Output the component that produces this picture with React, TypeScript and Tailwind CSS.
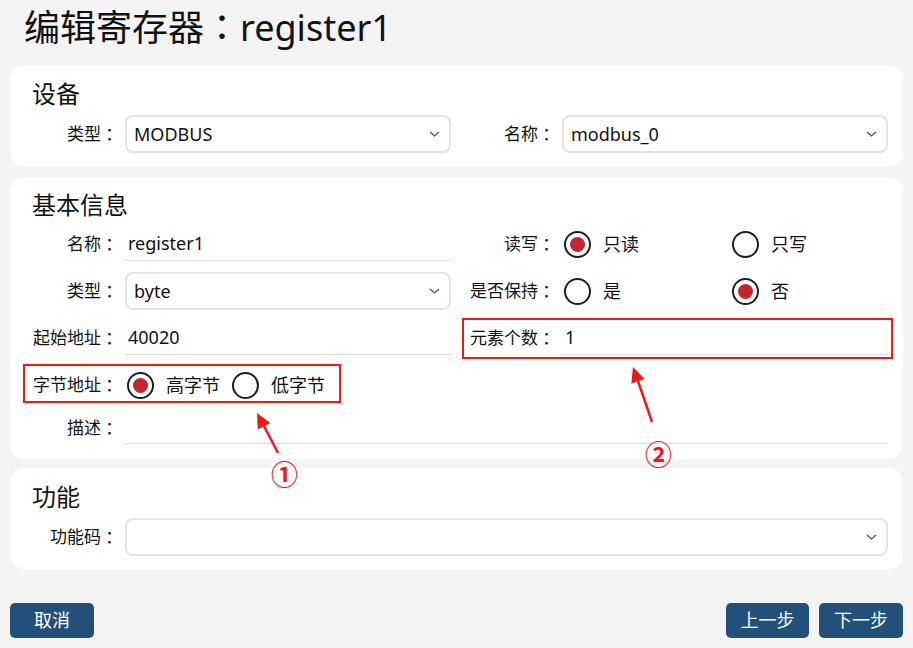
import React from "react";

function Chevron() {
  return (
    <svg width="11" height="6" viewBox="0 0 11 6" className="shrink-0">
      <path d="M1 1l4.5 4L10 1" fill="none" stroke="#555" strokeWidth="1.3" />
    </svg>
  );
}

function Select({ value = "" }: { value?: string }) {
  return (
    <div className="flex h-[38px] items-center justify-between rounded-[8px] border-2 border-[#e3e3e3] bg-white pl-[7px] pr-[9px] text-[18px] text-[#111]">
      <span>{value}</span>
      <Chevron />
    </div>
  );
}

function TextInput({ value = "", className = "h-[34px]" }: { value?: string; className?: string }) {
  return (
    <div className={`flex items-center border-b border-[#dcdcdc] pl-[3px] text-[18px] text-[#111] ${className}`}>
      {value}
    </div>
  );
}

function Radio({ checked = false, label }: { checked?: boolean; label: string }) {
  return (
    <div className="flex items-center gap-[12px]">
      <span className="flex h-[27px] w-[27px] items-center justify-center rounded-full border-2 border-[#1e1e1e]">
        {checked && <span className="h-[15px] w-[15px] rounded-full bg-[#c3262e]" />}
      </span>
      <span className="text-[18px] text-[#111]">{label}</span>
    </div>
  );
}

function Field({ label, children, className = "" }: { label: string; children: React.ReactNode; className?: string }) {
  return (
    <div className={`flex h-[38px] items-center ${className}`}>
      <div className="flex w-[86px] shrink-0 justify-end whitespace-nowrap text-[17px] text-[#111]">
        {label}
        <span className="font-['Noto_Sans_CJK_TC',sans-serif]">：</span>
      </div>
      <div className="ml-[7px] min-w-0 flex-1">{children}</div>
    </div>
  );
}

function Card({ title, children, className = "" }: { title: string; children: React.ReactNode; className?: string }) {
  return (
    <section className={`rounded-[14px] bg-white pl-[22px] pr-[15px] ${className}`}>
      <h2 className="h-[32px] text-[24px] leading-[32px] text-[#111]">{title}</h2>
      {children}
    </section>
  );
}

export default function App() {
  return (
    <div className="relative h-[648px] overflow-hidden bg-[#f4f4f4] px-[10px] font-['Noto_Sans','Noto_Sans_CJK_SC',sans-serif]">
      <h1 className="mb-[15px] h-[50px] pl-[14px] text-[36px] leading-[50px] text-[#111]">
        编辑寄存器<span className="font-['Noto_Sans_CJK_TC',sans-serif]">：</span>register1
      </h1>

      <Card title="设备" className="pt-[13px] pb-[14px]">
        <div className="mt-[5px] grid grid-cols-2 gap-x-[18px]">
          <Field label="类型">
            <Select value="MODBUS" />
          </Field>
          <Field label="名称">
            <Select value="modbus_0" />
          </Field>
        </div>
      </Card>

      <Card title="基本信息" className="mt-[10px] pt-[12px] pb-[12px]">
        <div className="mt-[4px] grid grid-cols-2 gap-x-[18px] gap-y-[9px]">
          <Field label="名称">
            <TextInput value="register1" />
          </Field>
          <Field label="读写">
            <div className="flex pl-[2px]">
              <div className="w-[168px]">
                <Radio checked label="只读" />
              </div>
              <Radio label="只写" />
            </div>
          </Field>

          <Field label="类型">
            <Select value="byte" />
          </Field>
          <Field label="是否保持">
            <div className="flex pl-[2px]">
              <div className="w-[168px]">
                <Radio label="是" />
              </div>
              <Radio checked label="否" />
            </div>
          </Field>

          <Field label="起始地址">
            <TextInput value="40020" />
          </Field>
          <Field label="元素个数">
            <TextInput value="1" />
          </Field>

          <Field label="字节地址" className="col-span-2">
            <div className="flex gap-[12px] pl-[2px]">
              <Radio checked label="高字节" />
              <Radio label="低字节" />
            </div>
          </Field>

          <Field label="描述" className="col-span-2 -mt-[4px]">
            <TextInput className="h-[31px]" />
          </Field>
        </div>
      </Card>

      <Card title="功能" className="mt-[9px] pt-[13px] pb-[13px]">
        <div className="mt-[5px]">
          <Field label="功能码">
            <Select />
          </Field>
        </div>
      </Card>

      <div className="mt-[34px] flex items-center justify-between">
        <button className="h-[35px] w-[84px] rounded-[5px] bg-[#22507a] text-[18px] text-white">取消</button>
        <div className="flex gap-[10px]">
          <button className="h-[35px] w-[83px] rounded-[5px] bg-[#22507a] text-[18px] text-white">上一步</button>
          <button className="h-[35px] w-[84px] rounded-[5px] bg-[#22507a] text-[18px] text-white">下一步</button>
        </div>
      </div>

      {/* annotations drawn over the form */}
      <div className="pointer-events-none absolute left-[23px] top-[364px] h-[39px] w-[318px] border-2 border-[#f01818]" />
      <div className="pointer-events-none absolute left-[462px] top-[318px] h-[41px] w-[431px] border-2 border-[#f01818]" />
      <svg className="pointer-events-none absolute left-0 top-0" width="913" height="648">
        <line x1="278" y1="453" x2="264" y2="426" stroke="#f01818" strokeWidth="2.5" />
        <polygon points="257,413 270.2,423 257.8,429.6" fill="#f01818" />
        <line x1="652" y1="422" x2="638" y2="381" stroke="#f01818" strokeWidth="2.5" />
        <polygon points="633,367 644.5,378.9 631.3,383.5" fill="#f01818" />
      </svg>
      <span className="pointer-events-none absolute left-[271px] top-[459px] text-[27px] font-bold leading-[34px] text-[#f01818] font-['DejaVu_Serif','Noto_Sans_CJK_SC',serif]">
        ①
      </span>
      <span className="pointer-events-none absolute left-[645px] top-[439px] text-[27px] font-bold leading-[34px] text-[#f01818] font-['DejaVu_Serif','Noto_Sans_CJK_SC',serif]">
        ②
      </span>
    </div>
  );
}
